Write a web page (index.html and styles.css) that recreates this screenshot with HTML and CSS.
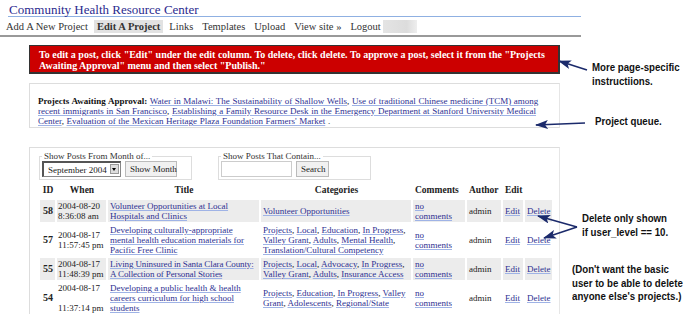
FILE: index.html
```html
<!DOCTYPE html>
<html lang="en">
<head>
    <meta charset="UTF-8">
    <title>Community Health Resource Center</title>
    <link rel="stylesheet" href="styles.css">
</head>
<body>
<div id="header">
    <h1>Community Health Resource Center</h1>
    <ul class="nav">
        <li><a href="#">Add A New Project</a></li>
        <li class="current"><a href="#">Edit A Project</a></li>
        <li><a href="#">Links</a></li>
        <li><a href="#">Templates</a></li>
        <li><a href="#">Upload</a></li>
        <li><a href="#">View site &raquo;</a></li>
        <li><a href="#">Logout</a><span class="blur"></span></li>
    </ul>
</div>

<div class="wrap">
    <div class="notice">
        To edit a post, click "Edit" under the edit column. To delete, click delete. To approve a post, select it from the "Projects Awaiting Approval" menu and then select "Publish."
    </div>

    <div class="box queue">
        <strong>Projects Awaiting Approval:</strong>
        <a href="#">Water in Malawi: The Sustainability of Shallow Wells</a>,
        <a href="#">Use of traditional Chinese medicine (TCM) among recent immigrants in San Francisco</a>,
        <a href="#">Establishing a Family Resource Desk in the Emergency Department at Stanford University Medical Center</a>,
        <a href="#">Evaluation of the Mexican Heritage Plaza Foundation Farmers' Market</a> .
    </div>

    <div class="box posts">
        <div class="filters">
            <fieldset class="month">
                <legend>Show Posts From Month of...</legend>
                <span class="select">
                    <select><option>September 2004</option></select>
                    <span class="arrow"></span>
                </span>
                <button>Show Month</button>
            </fieldset>
            <fieldset class="search">
                <legend>Show Posts That Contain...</legend>
                <input type="text">
                <button>Search</button>
            </fieldset>
        </div>
        <table>
            <colgroup>
                <col class="c-id">
                <col class="c-when">
                <col class="c-title">
                <col class="c-cats">
                <col class="c-comm">
                <col class="c-author">
                <col class="c-edit">
                <col class="c-del">
            </colgroup>
            <tr class="head">
                <th>ID</th>
                <th>When</th>
                <th>Title</th>
                <th>Categories</th>
                <th class="left">Comments</th>
                <th class="left">Author</th>
                <th class="left" colspan="2">Edit</th>
            </tr>
            <tr class="alt">
                <th class="id">58</th>
                <td class="when">2004-08-20<br>8:36:08 am</td>
                <td><a href="#">Volunteer Opportunities at Local Hospitals and Clinics</a></td>
                <td><a href="#">Volunteer Opportunities</a></td>
                <td class="comm"><a href="#">no comments</a></td>
                <td>admin</td>
                <td class="act"><a href="#">Edit</a></td>
                <td><a href="#">Delete</a></td>
            </tr>
            <tr>
                <th class="id">57</th>
                <td class="when">2004-08-17<br>11:57:45 pm</td>
                <td><a href="#">Developing culturally-appropriate mental health education materials for Pacific Free Clinic</a></td>
                <td><a href="#">Projects</a>, <a href="#">Local</a>, <a href="#">Education</a>, <a href="#">In Progress</a>, <a href="#">Valley Grant</a>, <a href="#">Adults</a>, <a href="#">Mental Health</a>, <a href="#">Translation/Cultural Competency</a></td>
                <td class="comm"><a href="#">no comments</a></td>
                <td>admin</td>
                <td class="act"><a href="#">Edit</a></td>
                <td><a href="#">Delete</a></td>
            </tr>
            <tr class="alt">
                <th class="id">55</th>
                <td class="when">2004-08-17<br>11:48:39 pm</td>
                <td class="tight"><a href="#">Living Uninsured in Santa Clara County: A Collection of Personal Stories</a></td>
                <td><a href="#">Projects</a>, <a href="#">Local</a>, <a href="#">Advocacy</a>, <a href="#">In Progress</a>, <a href="#">Valley Grant</a>, <a href="#">Adults</a>, <a href="#">Insurance Access</a></td>
                <td class="comm"><a href="#">no comments</a></td>
                <td>admin</td>
                <td class="act"><a href="#">Edit</a></td>
                <td><a href="#">Delete</a></td>
            </tr>
            <tr>
                <th class="id">54</th>
                <td class="when split"><span>2004-08-17</span><span>11:37:14 pm</span></td>
                <td><a href="#">Developing a public health &amp; health careers curriculum for high school students</a></td>
                <td><a href="#">Projects</a>, <a href="#">Education</a>, <a href="#">In Progress</a>, <a href="#">Valley Grant</a>, <a href="#">Adolescents</a>, <a href="#">Regional/State</a></td>
                <td class="comm"><a href="#">no comments</a></td>
                <td>admin</td>
                <td class="act"><a href="#">Edit</a></td>
                <td><a href="#">Delete</a></td>
            </tr>
        </table>
    </div>
</div>

<!-- annotations -->
<svg class="arrows" width="700" height="314" viewBox="0 0 700 314">
    <defs>
        <marker id="head" markerWidth="13" markerHeight="9" refX="12" refY="4.5" orient="auto" markerUnits="userSpaceOnUse">
            <path d="M0,0 L13,4.5 L0,9 L3,4.5 Z" fill="#1b2a6b"/>
        </marker>
    </defs>
    <line x1="587" y1="70" x2="559" y2="61" stroke="#1b2a6b" stroke-width="1.6" marker-end="url(#head)"/>
    <line x1="585" y1="123" x2="536" y2="125" stroke="#1b2a6b" stroke-width="1.6" marker-end="url(#head)"/>
    <line x1="577" y1="227" x2="538" y2="216" stroke="#1b2a6b" stroke-width="1.6" marker-end="url(#head)"/>
    <line x1="577" y1="227" x2="544" y2="238" stroke="#1b2a6b" stroke-width="1.6" marker-end="url(#head)"/>
</svg>
<p class="note n1">More page-specific<br>instructiions.</p>
<p class="note n2">Project queue.</p>
<p class="note n3">Delete only shown<br>if user_level == 10.</p>
<p class="note n4">(Don't want the basic<br>user to be able to delete<br>anyone else's projects.)</p>
</body>
</html>
```

FILE: styles.css
```css
body {
    margin: 0;
    font-family: "Liberation Serif", "DejaVu Serif", serif;
    font-size: 9px;
    color: #222;
    background-color: white;
    width: 700px;
    height: 314px;
    overflow: hidden;
    position: relative;
}

a {
    color: #2e3192;
    text-decoration: underline;
    text-decoration-color: #9fb3e6;
}

#header {
    width: 581px;
    border-bottom: 2px solid #999;
}

h1 {
    margin: 0 0 0 8px;
    padding: 3px 0 0 1px;
    height: 13px;
    font-size: 13px;
    font-weight: normal;
    line-height: 13px;
    color: #2a2a8e;
    border-bottom: 1px solid #8fb0e2;
}

.nav {
    list-style: none;
    margin: 0;
    padding: 3px 0 2px 3px;
    display: flex;
    gap: 3px;
    font-size: 10.5px;
}

.nav li {
    padding: 1px 3px;
    line-height: 11px;
}

.nav a {
    color: #333;
    text-decoration: none;
}

.nav .current {
    background-color: #e2e2e2;
    font-weight: bold;
}

.nav .blur {
    display: inline-block;
    width: 34px;
    height: 13px;
    margin: -1px 0 -2px 2px;
    vertical-align: top;
    background: linear-gradient(90deg, #e4e4e4, #dcdcdc 70%, #eee);
}

.wrap {
    margin: 8px 0 0 29px;
    width: 531px;
}

.notice {
    background-color: #cc0000;
    border: 1px solid #333;
    border-width: 1px 2px 2px 1px;
    color: white;
    font-weight: bold;
    padding: 3px 6px 1px 9px;
    line-height: 11px;
    font-size: 10px;
}

.box {
    border: 1px solid #ddd;
    border-right-color: #e6e6e6;
}

.queue {
    margin-top: 9px;
    box-sizing: border-box;
    height: 45px;
    padding: 12px 4px 0 8px;
    line-height: 10px;
    font-size: 9px;
    word-spacing: 0.4px;
}

.queue strong {
    color: #111;
}

.posts {
    margin-top: 19px;
    padding: 3px 0 0 9px;
}

.filters {
    display: flex;
    gap: 26px;
}

fieldset {
    margin: 0;
    padding: 0 2px 2px 2px;
    border: 1px solid #ddd;
    display: flex;
    gap: 4px;
    align-items: center;
    width: 153px;
    box-sizing: border-box;
}

legend {
    padding: 0 2px;
    font-size: 9px;
    line-height: 10px;
    color: #333;
}

select, input, button {
    font-family: "Liberation Serif", serif;
    font-size: 9px;
    margin: 0;
    white-space: nowrap;
    color: #222;
}

.select {
    position: relative;
    display: inline-block;
    height: 16px;
}

select {
    appearance: none;
    width: 79px;
    height: 16px;
    padding: 0 0 0 4px;
    border: 1px solid #888;
    border-top: 2px solid #555;
    border-left: 2px solid #555;
    border-radius: 0;
    background-color: white;
}

.select .arrow {
    position: absolute;
    right: 2px;
    top: 3px;
    width: 9px;
    height: 10px;
    box-sizing: border-box;
    background-color: #ddd;
    border: 1px solid #999;
}

.select .arrow::after {
    content: "";
    position: absolute;
    left: 1px;
    top: 3px;
    border-left: 2.5px solid transparent;
    border-right: 2.5px solid transparent;
    border-top: 3px solid #000;
}

button {
    height: 16px;
    padding: 0 4px;
    background-color: #f1f1f1;
    border: 1px solid #bbb;
}

.month button {
    width: 52px;
}

.search input {
    width: 71px;
    height: 16px;
    box-sizing: border-box;
    padding: 0;
    border: 1px solid #ccc;
}

.search button {
    width: 33px;
}

table {
    margin: 2px 0 0 -1px;
    width: 516px;
    table-layout: fixed;
    border-collapse: separate;
    border-spacing: 2px;
    line-height: 10px;
}

col.c-id { width: 15px; }
col.c-when { width: 49px; }
col.c-title { width: 151px; }
col.c-cats { width: 150px; }
col.c-comm { width: 52px; }
col.c-author { width: 34px; }
col.c-edit { width: 20px; }
col.c-del { width: 27px; }

th, td {
    box-sizing: border-box;
    padding: 1px 1px 1px 2px;
    vertical-align: middle;
    overflow: hidden;
}

th {
    font-weight: bold;
    color: #222;
    font-size: 9.5px;
}

.head th {
    padding-bottom: 3px;
}

th.left {
    text-align: left;
}

td.when {
    white-space: nowrap;
    padding-left: 1px;
}

td.tight {
    letter-spacing: -0.12px;
}

td.comm {
    padding-right: 10px;
}

td.act {
    padding-right: 0;
}

.alt th, .alt td {
    background-color: #ececec;
}

.id {
    font-size: 10px;
}

.split span {
    display: block;
}

.split span + span {
    margin-top: 10px;
}

.arrows {
    position: absolute;
    left: 0;
    top: 0;
}

.note {
    position: absolute;
    margin: 0;
    font-family: "Liberation Sans", Arial, sans-serif;
    font-weight: bold;
    font-size: 11px;
    line-height: 13.5px;
    color: #111;
    white-space: nowrap;
    transform: scaleX(0.88);
    transform-origin: left top;
}

.n1 {
    left: 592px;
    top: 61px;
}

.n2 {
    left: 595px;
    top: 115px;
}

.n3 {
    left: 582px;
    top: 212px;
}

.n4 {
    left: 572px;
    top: 263px;
}
```
